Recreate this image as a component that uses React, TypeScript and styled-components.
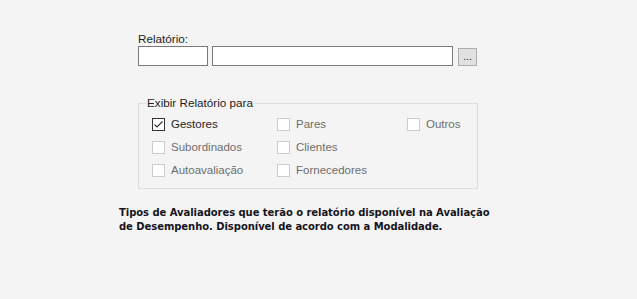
import React from 'react';
import styled, { createGlobalStyle } from 'styled-components';

const GlobalStyle = createGlobalStyle`
  html, body {
    margin: 0;
    padding: 0;
    background: #f4f4f4;
  }

  body {
    font-family: "Liberation Sans", Arial, sans-serif;
    font-size: 12px;
    color: #1e1e1e;
  }
`;

const Page = styled.div`
  width: 637px;
  height: 299px;
  box-sizing: border-box;
  padding: 32px 0 0 119px;
  display: flex;
  flex-direction: column;
`;

const Form = styled.div`
  margin-left: 19px;
  display: flex;
  flex-direction: column;
`;

const FieldLabel = styled.label`
  line-height: 14px;
  font-size: 11.7px;
  color: #1e1e1e;
`;

const InputRow = styled.div`
  display: flex;
  align-items: center;
  gap: 4px;
  height: 20px;
`;

const TextBox = styled.input<{ $width: number }>`
  box-sizing: border-box;
  width: ${(p) => p.$width}px;
  height: 20px;
  margin: 0;
  padding: 0 3px;
  border: 1px solid #7a7a7a;
  border-radius: 0;
  background: #ffffff;
  outline: none;
  font-family: inherit;
  font-size: 12px;
`;

const BrowseButton = styled.button`
  box-sizing: border-box;
  width: 19px;
  height: 18px;
  margin: 1px 0 0 1px;
  padding: 0 0 3px;
  border: 1px solid #adadad;
  background: #e1e1e1;
  font-family: inherit;
  font-size: 11px;
  line-height: 12px;
  color: #3a2a5a;
  display: flex;
  align-items: flex-end;
  justify-content: center;
`;

const GroupBox = styled.fieldset`
  box-sizing: border-box;
  width: 340px;
  margin: 30px 0 0;
  padding: 8px 0 11px 13px;
  border: 1px solid #dcdcdc;
  border-radius: 0;
`;

const GroupTitle = styled.legend`
  margin-left: -6px;
  padding: 0 2px 0 1px;
  line-height: 14px;
  font-size: 11.7px;
  color: #1e1e1e;
`;

const OptionGrid = styled.div`
  display: grid;
  grid-template-columns: 125px 130px auto;
  grid-auto-rows: 13px;
  row-gap: 10px;
`;

const Option = styled.label<{ $checked?: boolean }>`
  display: flex;
  align-items: center;
  gap: 6px;
  line-height: 13px;
  font-size: 11.5px;
  white-space: nowrap;
  color: ${(p) => (p.$checked ? '#1e1e1e' : '#6d6d6d')};
`;

const Box = styled.span<{ $checked?: boolean }>`
  box-sizing: border-box;
  width: 13px;
  height: 13px;
  flex: none;
  border: 1px solid ${(p) => (p.$checked ? '#333333' : '#cccccc')};
  background: #ffffff;
  display: flex;
  align-items: center;
  justify-content: center;
`;

const Spacer = styled.span``;

const Description = styled.p`
  width: 380px;
  margin: 17px 0 0;
  font-family: "DejaVu Sans", Verdana, sans-serif;
  font-weight: bold;
  font-size: 10px;
  letter-spacing: -0.05px;
  line-height: 14px;
  color: #141420;
`;

const Check = () => (
  <svg width="11" height="11" viewBox="0 0 11 11">
    <path d="M1.5 5.5 L4 8 L9.5 2.5" fill="none" stroke="#333" strokeWidth="1.1" />
  </svg>
);

const options: (string | null)[] = [
  'Gestores', 'Pares', 'Outros',
  'Subordinados', 'Clientes', null,
  'Autoavaliação', 'Fornecedores', null,
];

const App: React.FC = () => {
  return (
    <Page>
      <GlobalStyle />
      <Form>
        <FieldLabel>Relatório:</FieldLabel>
        <InputRow>
          <TextBox $width={70} />
          <TextBox $width={241} />
          <BrowseButton>...</BrowseButton>
        </InputRow>
        <GroupBox>
          <GroupTitle>Exibir Relatório para</GroupTitle>
          <OptionGrid>
            {options.map((name, index) => {
              if (!name) return <Spacer key={index} />;
              const checked = name === 'Gestores';
              return (
                <Option key={index} $checked={checked}>
                  <Box $checked={checked}>{checked && <Check />}</Box>
                  {name}
                </Option>
              );
            })}
          </OptionGrid>
        </GroupBox>
      </Form>
      <Description>
        Tipos de Avaliadores que terão o relatório disponível na Avaliação de Desempenho. Disponível de acordo com a Modalidade.
      </Description>
    </Page>
  );
};

export default App;
